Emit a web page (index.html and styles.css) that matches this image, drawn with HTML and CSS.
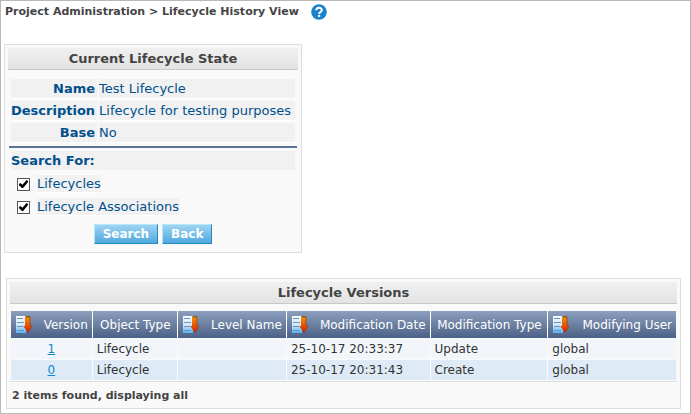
FILE: index.html
```html
<!DOCTYPE html>
<html lang="en">
<head>
<meta charset="utf-8">
<title>Lifecycle History View</title>
<link rel="stylesheet" href="styles.css">
</head>
<body>
<svg class="defs" width="0" height="0" aria-hidden="true">
  <defs>
    <linearGradient id="page" x1="0" y1="0" x2="0" y2="1"><stop offset="0" stop-color="#f4f9fd"/><stop offset=".5" stop-color="#d5ebfa"/><stop offset="1" stop-color="#55b4f4"/></linearGradient>
    <linearGradient id="arrow" x1="0" y1="0" x2="0" y2="1"><stop offset="0" stop-color="#f29400"/><stop offset=".5" stop-color="#e85a00"/><stop offset="1" stop-color="#c81c00"/></linearGradient>
    <symbol id="sort" viewBox="0 0 17 18">
      <path d="M0 0H10V17H0Z" fill="url(#page)"/>
      <path d="M1 2.5H7M1 6.5H8M1 10.5H7M1 14.5H8" stroke="#6f93c0" stroke-width="1"/>
      <path d="M9 1L10 .5H14V10H16.3L12 16.8L7.2 10H9Z" fill="url(#arrow)"/>
      <path d="M14 1V10H16L12 16.5" fill="none" stroke="#a03c10" stroke-width=".7"/>
      <path d="M9.5 .8H14" stroke="#713b20"/>
    </symbol>
  </defs>
</svg>
<header class="crumbs">
  <h1>Project Administration &gt; Lifecycle History View</h1>
  <a href="#" class="help" aria-label="Help">
    <svg width="16" height="16" viewBox="0 0 16 16"><circle cx="8" cy="8" r="7.8" fill="#1b82cc"/><path d="M5.3 6.3C5.3 2.9 10.8 2.9 10.8 6C10.8 8 8.1 7.9 8.1 10" fill="none" stroke="#fff" stroke-width="2"/><path d="M7 11h2.2v2H7z" fill="#fff"/></svg>
  </a>
</header>
<main>
  <form class="panel state">
    <h2>Current Lifecycle State</h2>
    <dl class="fields">
      <dt>Name</dt><dd>Test Lifecycle</dd>
      <dt>Description</dt><dd>Lifecycle for testing purposes</dd>
      <dt>Base</dt><dd>No</dd>
    </dl>
    <fieldset class="search">
      <legend>Search For:</legend>
      <div class="option"><input type="checkbox" id="lc" checked><label for="lc">Lifecycles</label></div>
      <div class="option"><input type="checkbox" id="la" checked><label for="la">Lifecycle Associations</label></div>
    </fieldset>
    <div class="actions"><button type="button">Search</button><button type="button">Back</button></div>
  </form>
  <section class="panel versions">
    <h2>Lifecycle Versions</h2>
    <table>
      <colgroup><col class="c-version"><col class="c-object"><col class="c-level"><col class="c-date"><col class="c-type"><col class="c-user"></colgroup>
      <thead>
        <tr>
          <th><span class="sortable"><svg width="17" height="18"><use href="#sort"/></svg>Version</span></th>
          <th>Object Type</th>
          <th><span class="sortable"><svg width="17" height="18"><use href="#sort"/></svg>Level Name</span></th>
          <th><span class="sortable"><svg width="17" height="18"><use href="#sort"/></svg>Modification Date</span></th>
          <th>Modification Type</th>
          <th><span class="sortable"><svg width="17" height="18"><use href="#sort"/></svg>Modifying User</span></th>
        </tr>
      </thead>
      <tbody>
        <tr><td class="num"><a href="#">1</a></td><td>Lifecycle</td><td></td><td>25-10-17 20:33:37</td><td>Update</td><td>global</td></tr>
        <tr><td class="num"><a href="#">0</a></td><td>Lifecycle</td><td></td><td>25-10-17 20:31:43</td><td>Create</td><td>global</td></tr>
      </tbody>
    </table>
    <p class="summary">2 items found, displaying all</p>
  </section>
</main>
</body>
</html>
```
FILE: styles.css
```css
* { box-sizing: border-box; }
html { min-height: 100%; display: grid; }
body {
  margin: 0;
  border: 1px solid #b8b8b8;
  background: #fff;
  color: #333;
  font: 13px/18px Verdana, "DejaVu Sans", sans-serif;
}
.defs { position: absolute; }
h1, h2, p, dl, dd, fieldset { margin: 0; }

.crumbs { display: flex; align-items: center; gap: 12px; padding: 3px 4px; }
.crumbs h1 { color: #444; font-size: 11px; line-height: 16px; }
.help { display: block; height: 16px; }
.help svg { display: block; }

.panel { border: 1px solid #ddd; background: #f9f9f9; padding: 3px; }
.panel h2 {
  height: 22px;
  border-bottom: 1px solid #c8c8c8;
  background: linear-gradient(#f0f0f0, #e3e3e3);
  color: #444;
  font-size: 13px;
  line-height: 21px;
  text-align: center;
}

.state { width: fit-content; margin: 21px 0 0 3px; color: #00508c; }
.fields {
  display: grid;
  grid-template-columns: auto auto;
  gap: 2px;
  padding: 9px 3px 3px;
}
.fields dt, .fields dd { border-bottom: 1px solid #fff; background: #f1f1f1; line-height: 19px; }
.fields dt { padding-right: 2px; font-weight: bold; text-align: right; }
.fields dd { padding-right: 4px; }

.search { margin: 0 1px; border: 0; border-top: 2px solid #5a7394; padding: 3px 2px 0; }
.search legend { float: left; width: 100%; margin-bottom: 4px; padding: 0; background: #f1f1f1; font-weight: bold; line-height: 19px; }
.option { clear: both; display: flex; align-items: center; height: 23px; gap: 7px; padding-left: 6px; }
.option label { border-bottom: 1px solid #fff; background: #f1f1f1; line-height: 17px; margin-bottom: 3px; }
.option input {
  appearance: none;
  width: 13px;
  height: 13px;
  margin: 0 0 2px;
  border: 1px solid #555;
  background: #fff;
}
.option input:checked::before {
  content: "";
  display: block;
  width: 9px;
  height: 8px;
  margin: 1px;
  background: #000;
  clip-path: polygon(0 50%, 14% 36%, 38% 58%, 84% 0, 100% 14%, 100% 26%, 46% 100%, 32% 100%, 0 66%);
}
.actions { display: flex; justify-content: center; gap: 4px; padding: 4px 0 5px; }
.actions button {
  border: 1px solid #b4e8fa;
  border-right-color: #2589c8;
  border-bottom-color: #2589c8;
  background: linear-gradient(#9ed4f2, #50a8df);
  padding: 0 8px;
  color: #fff;
  font: bold 12px/18px Verdana, "DejaVu Sans", sans-serif;
}

.versions { margin: 25px 9px 4px 5px; }
.versions table {
  width: calc(100% - 2px);
  margin: 7px 1px 0;
  border-collapse: separate;
  border-spacing: 0;
  table-layout: fixed;
}
.c-version { width: 12.3%; }
.c-object { width: 12.8%; }
.c-level { width: 16.4%; }
.c-date { width: 21.6%; }
.c-type { width: 17.7%; }
th {
  height: 27px;
  border-right: 1px solid #fff;
  background: linear-gradient(#8d9fbd, #4b6186);
  padding: 0 4px 0 5px;
  color: #fff;
  font-size: 12px;
  font-weight: normal;
  white-space: nowrap;
}
.sortable { display: flex; align-items: center; justify-content: space-between; }
td {
  height: 21px;
  border-right: 1px solid #fafafa;
  border-top: 1px solid #fafafa;
  background: #f2f6fb;
  padding: 0 4px;
  font-size: 12px;
}
th:last-child, td:last-child { border-right: 0; }
tr:nth-child(2) td { background: #deebf6; }
.num { text-align: center; }
.num a { color: #0a87d2; }
.summary { margin-top: 1px; border-top: 1px solid #ddd; padding: 5px 2px 0; height: 24px; color: #444; font-size: 11px; font-weight: bold; }
```
